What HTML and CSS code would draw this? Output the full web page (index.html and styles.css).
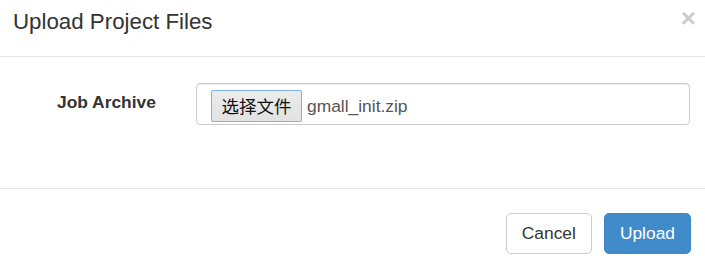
FILE: index.html
```html
<!DOCTYPE html>
<html>
<head>
<meta charset="utf-8">
<link rel="stylesheet" href="styles.css">
</head>
<body>
<div class="modal">
  <div class="modal-header">
    <h4 class="modal-title">Upload Project Files</h4>
    <span class="close">×</span>
  </div>
  <div class="modal-body">
    <div class="form-row">
      <label class="control-label">Job Archive</label>
      <div class="file-input">
        <span class="file-btn">选择文件</span>
        <span class="file-name">gmall_init.zip</span>
      </div>
    </div>
  </div>
  <div class="modal-footer">
    <button class="btn btn-default">Cancel</button>
    <button class="btn btn-primary">Upload</button>
  </div>
</div>
</body>
</html>
```
FILE: styles.css
```css
html, body {
  margin: 0;
  padding: 0;
  background: #fff;
}
body {
  font-family: "Liberation Sans", Arial, "Noto Sans CJK SC", sans-serif;
  color: #333;
}
.modal {
  width: 705px;
  height: 265px;
  background: #fff;
}
.modal-header {
  height: 57px;
  box-sizing: border-box;
  border-bottom: 1px solid #e5e5e5;
  padding: 9px 9px 0 13px;
  display: flex;
  justify-content: space-between;
  align-items: flex-start;
}
.modal-title {
  margin: 0;
  font-size: 22.3px;
  font-weight: normal;
  line-height: 26px;
  color: #333;
}
.close {
  font-size: 26px;
  font-weight: bold;
  line-height: 1;
  color: #000;
  opacity: 0.2;
  margin-top: -4px;
}
.modal-body {
  height: 131px;
  box-sizing: border-box;
  padding: 26px 15px 0 57px;
}
.form-row {
  display: grid;
  grid-template-columns: 139px 494px;
}
.control-label {
  font-weight: bold;
  font-size: 17.4px;
  line-height: 20px;
  padding-top: 9px;
}
.file-input {
  height: 42px;
  box-sizing: border-box;
  border: 1px solid #ccc;
  border-radius: 4px;
  box-shadow: inset 0 1px 1px rgba(0,0,0,0.075);
  padding: 6px 14px 0;
  display: flex;
  align-items: flex-start;
  align-self: start;
}
.file-btn {
  box-sizing: border-box;
  width: 91px;
  height: 32px;
  border: 1px solid #7eb4ea;
  border-radius: 2px;
  background: linear-gradient(#ececec, #e2e2e2);
  font-family: "Noto Sans CJK SC", sans-serif;
  font-size: 17.5px;
  line-height: 30px;
  color: #111;
  text-align: center;
}
.file-name {
  margin-left: 5px;
  font-size: 17.4px;
  line-height: 32px;
  color: #555;
}
.modal-footer {
  border-top: 1px solid #e5e5e5;
  padding: 24px 14px 0 0;
  display: flex;
  justify-content: flex-end;
  gap: 12px;
}
.btn {
  font-family: "Liberation Sans", Arial, sans-serif;
  font-size: 17.4px;
  line-height: 23px;
  padding: 8px 15px;
  border-radius: 5px;
  border: 1px solid #ccc;
  background: #fff;
  color: #333;
}
.btn-primary {
  background: #428bca;
  border-color: #3f86c4;
  color: #fff;
}
```
